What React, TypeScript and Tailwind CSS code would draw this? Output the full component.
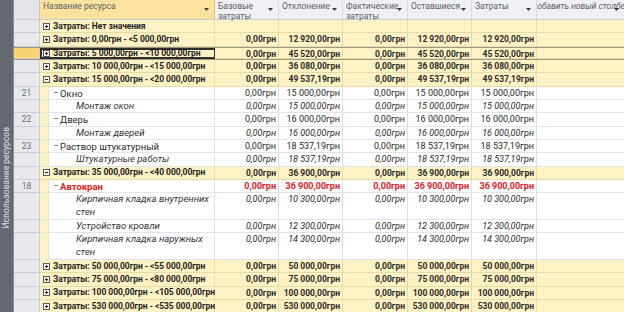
import React from 'react';

type Kind = 'group' | 'res' | 'asg' | 'blank';

interface Row {
  kind: Kind;
  name: string;
  line2?: string;
  num?: string;
  vals?: string[];
  open?: boolean;
  red?: boolean;
  sel?: boolean;
}

const Z = '0,00грн';
const five = (v: string) => [Z, v, Z, v, v];

const ROWS: Row[] = [
  { kind: 'group', name: 'Затраты: Нет значения' },
  { kind: 'group', name: 'Затраты: 0,00грн - <5 000,00грн', vals: five('12 920,00грн') },
  { kind: 'group', name: 'Затраты: 5 000,00грн - <10 000,00грн', vals: five('45 520,00грн'), sel: true },
  { kind: 'group', name: 'Затраты: 10 000,00грн - <15 000,00грн', vals: five('36 080,00грн') },
  { kind: 'group', name: 'Затраты: 15 000,00грн - <20 000,00грн', vals: five('49 537,19грн'), open: true },
  { kind: 'res', num: '21', name: 'Окно', vals: five('15 000,00грн') },
  { kind: 'asg', name: 'Монтаж окон', vals: five('15 000,00грн') },
  { kind: 'res', num: '22', name: 'Дверь', vals: five('16 000,00грн') },
  { kind: 'asg', name: 'Монтаж дверей', vals: five('16 000,00грн') },
  { kind: 'res', num: '23', name: 'Раствор штукатурный', vals: five('18 537,19грн') },
  { kind: 'asg', name: 'Штукатурные работы', vals: five('18 537,19грн') },
  { kind: 'group', name: 'Затраты: 35 000,00грн - <40 000,00грн', vals: five('36 900,00грн'), open: true },
  { kind: 'res', num: '18', name: 'Автокран', vals: five('36 900,00грн'), red: true },
  { kind: 'asg', name: 'Кирпичная кладка внутренних', line2: 'стен', vals: five('10 300,00грн') },
  { kind: 'asg', name: 'Устройство кровли', vals: five('12 300,00грн') },
  { kind: 'asg', name: 'Кирпичная кладка наружных', line2: 'стен', vals: five('14 300,00грн') },
  { kind: 'group', name: 'Затраты: 50 000,00грн - <55 000,00грн', vals: five('50 000,00грн') },
  { kind: 'group', name: 'Затраты: 75 000,00грн - <80 000,00грн', vals: five('75 000,00грн') },
  { kind: 'group', name: 'Затраты: 100 000,00грн - <105 000,00грн', vals: five('100 000,00грн') },
  { kind: 'group', name: 'Затраты: 530 000,00грн - <535 000,00грн', vals: five('530 000,00грн') },
  { kind: 'blank', name: '' },
];

const COLS = ['w-[64px]', 'w-[64px]', 'w-[65px]', 'w-[64px]', 'w-[65px]'];

const HEAD = [
  ['Базовые', 'затраты'],
  ['Отклонение'],
  ['Фактические', 'затраты'],
  ['Оставшиеся'],
  ['Затраты'],
];

const Arrow = () => (
  <svg width="5" height="3" viewBox="0 0 5 3" className="absolute right-[5px] top-[8px]">
    <path d="M0 0h5L2.5 3z" fill="#3c3c3c" />
  </svg>
);

const Toggle = ({ open }: { open?: boolean }) => (
  <svg width="7" height="7" viewBox="0 0 7 7" className="shrink-0">
    <rect x="0.5" y="0.5" width="6" height="6" fill="#f4f4f4" stroke="#5c5c5c" />
    <path d="M2 3.5h3" stroke="#222" />
    {!open && <path d="M3.5 2v3" stroke="#222" />}
  </svg>
);

export default function App() {
  return (
    <div className="flex h-[312px] w-[624px] overflow-hidden bg-white font-['Roboto',sans-serif] text-[#2a2a2a]">
      {/* вертикальная подпись представления */}
      <div className="flex w-[14px] shrink-0 flex-col items-center justify-end border-r border-[#8c9097] bg-[#656970] pb-[84px]">
        <span className="rotate-180 whitespace-nowrap text-[8.5px] leading-[13px] text-[#dfe1e4] [writing-mode:vertical-rl]">
          Использование ресурсов
        </span>
      </div>

      <div className="flex min-w-0 flex-1 flex-col">
        {/* шапка */}
        <div className="flex h-[20px] shrink-0 border-b border-[#c9ccd1] text-[8.5px] leading-[9.5px] text-[#5b5f66]">
          <div className="w-[26px] shrink-0 border-r border-[#c5c8ce] bg-[#e2e4e8]" />
          <div className="relative w-[175px] shrink-0 border-r border-[#d9c27a] bg-[#fbe39e] pl-[3px] pt-[2px]">
            Название ресурса
            <Arrow />
          </div>
          {HEAD.map((h, i) => (
            <div
              key={i}
              className={`relative ${COLS[i]} shrink-0 border-r border-[#d6d9de] bg-[#eef0f3] pl-[3px] pt-[2px]`}
            >
              {h.map(t => (
                <div key={t}>{t}</div>
              ))}
              <Arrow />
            </div>
          ))}
          {/* столбец шире видимой области — подпись обрезана с обеих сторон */}
          <div className="relative flex-1 overflow-hidden bg-[#eef0f3] pt-[2px] italic">
            <div className="-ml-[6px] whitespace-nowrap">Добавить новый столбец</div>
            <Arrow />
          </div>
        </div>

        {ROWS.map((r, idx) => {
          const group = r.kind === 'group' || r.kind === 'blank';
          const tall = !!r.line2;
          const h = tall ? 'h-[26.67px]' : 'h-[13.33px]';
          const line = group ? 'border-[#e6dcaa]' : 'border-[#e3e5e9]';
          const bg = group ? 'bg-[#fdf2c4]' : 'bg-white';
          const color = r.red ? 'text-[#e3201c] font-bold' : '';
          const numCls = group
            ? 'font-bold text-[8.5px]'
            : r.kind === 'asg'
              ? 'italic text-[9px]'
              : 'text-[9px]';
          return (
            <div
              key={idx}
              className={`flex ${h} shrink-0 ${bg} ${r.sel ? 'border-y border-[#9d9680]' : ''}`}
            >
              <div
                className={`w-[26px] shrink-0 border-b border-r border-[#c9ccd2] text-center text-[8.5px] leading-[13px] text-[#6c7078] ${
                  r.sel ? 'bg-[#f8d571]' : 'bg-[#e6e8ec]'
                }`}
              >
                {r.num}
              </div>

              {/* название */}
              <div
                className={`flex w-[175px] shrink-0 border-r ${
                  r.sel ? 'border-2 border-[#2e2e2e]' : `border-b ${line}`
                } ${group ? '' : 'border-r-[#dcdfe3]'}`}
              >
                {group ? (
                  <div className={`flex items-center gap-[3px] ${r.sel ? 'pl-[1px]' : 'pl-[3px]'}`}>
                    {r.kind === 'group' && <Toggle open={r.open} />}
                    <span className="whitespace-nowrap text-[8.5px] font-bold tracking-[-0.05px] text-[#1d1d1d]">
                      {r.name}
                    </span>
                  </div>
                ) : (
                  <>
                    <div className="w-[9px] shrink-0 border-r border-[#ece3b8] bg-[#fdf2c4]" />
                    {r.kind === 'res' ? (
                      <div className="flex items-start pl-[5px]">
                        <div className="mr-[2px] mt-[5px] h-px w-[4px] bg-[#8a8a8a]" />
                        <span className={`whitespace-nowrap text-[9.5px] leading-[13px] ${color}`}>
                          {r.name}
                        </span>
                      </div>
                    ) : (
                      <div className="pl-[27px] text-[9.5px] italic leading-[12.5px] text-[#333]">
                        <div className="whitespace-nowrap">{r.name}</div>
                        {r.line2 && <div>{r.line2}</div>}
                      </div>
                    )}
                  </>
                )}
              </div>

              {/* числовые столбцы */}
              {COLS.map((w, i) => (
                <div
                  key={i}
                  className={`${w} shrink-0 border-b border-r ${line} ${
                    group ? '' : 'border-r-[#dcdfe3]'
                  } whitespace-nowrap pr-[2px] text-right leading-[13px] ${numCls} ${color}`}
                >
                  {r.vals?.[i]}
                </div>
              ))}
              <div className={`flex-1 border-b ${line}`} />
            </div>
          );
        })}
      </div>
    </div>
  );
}
